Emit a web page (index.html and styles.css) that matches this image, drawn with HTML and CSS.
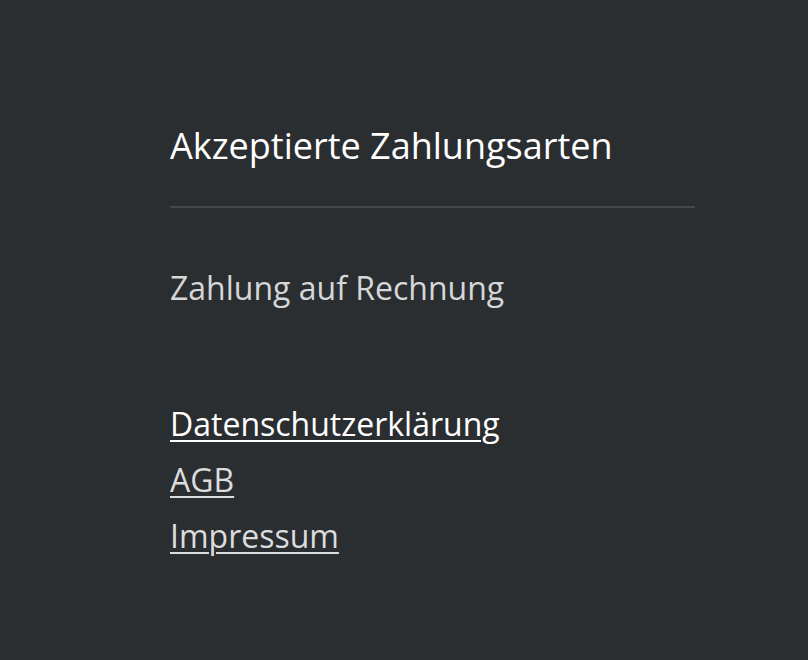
FILE: index.html
```html
<!DOCTYPE html>
<html lang="de">
<head>
<meta charset="utf-8">
<link rel="stylesheet" href="styles.css">
</head>
<body>
<footer class="footer">
  <section class="payments">
    <h2 class="title">Akzeptierte Zahlungsarten</h2>
    <p class="method">Zahlung auf Rechnung</p>
  </section>
  <nav class="links">
    <a class="link link-active" href="#">Datenschutzerklärung</a>
    <a class="link" href="#">AGB</a>
    <a class="link" href="#">Impressum</a>
  </nav>
</footer>
</body>
</html>
```
FILE: styles.css
```css
html, body {
  margin: 0;
  padding: 0;
  background: #2b2e31;
  height: 100%;
}
body {
  font-family: "Open Sans", "Liberation Sans", sans-serif;
}
.footer {
  width: 525px;
  margin-left: 170px;
  padding-top: 122px;
}
.title {
  margin: 0;
  font-size: 36px;
  font-weight: 400;
  color: #ffffff;
  line-height: 48px;
  padding-bottom: 36px;
  border-bottom: 2px solid #45484b;
}
.method {
  margin: 0;
  margin-top: 60px;
  font-size: 32px;
  line-height: 40px;
  color: #d6d7d8;
}
.links {
  display: flex;
  flex-direction: column;
  align-items: flex-start;
  margin-top: 88px;
}
.link {
  font-size: 32px;
  line-height: 56px;
  color: #dcdcdd;
  text-decoration: underline;
  text-decoration-thickness: 2px;
  text-underline-offset: 4px;
}
.link-active {
  color: #ffffff;
}
```
